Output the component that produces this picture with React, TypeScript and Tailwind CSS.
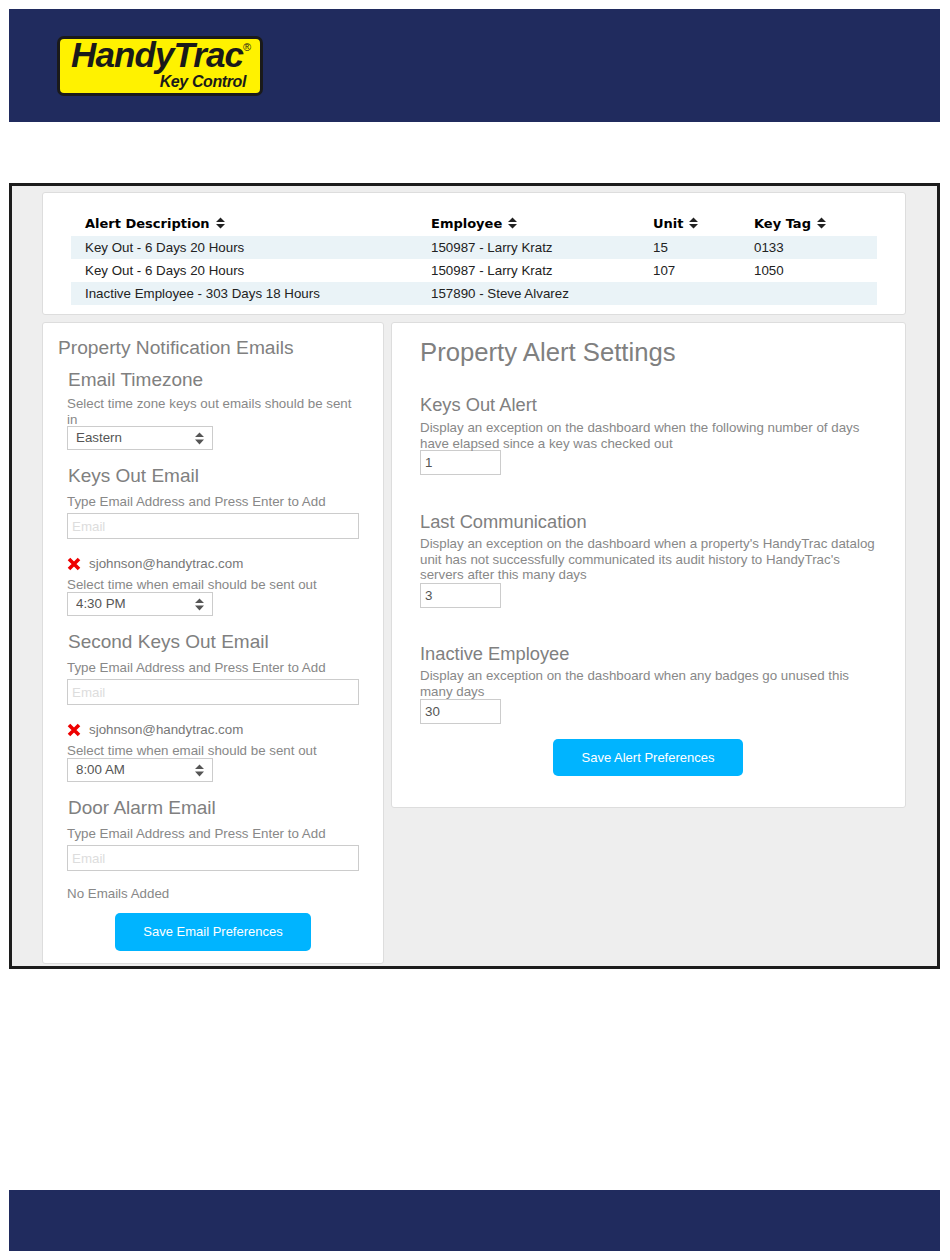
const SortIcon = () => (
  <svg viewBox="0 0 9 12" className="inline-block w-[9px] h-[12px] ml-[6px] align-[-1px]">
    <path d="M4.5 0.5 L9 5 H0 Z M0 7 H9 L4.5 11.5 Z" fill="#222" />
  </svg>
);

const SelectArrows = () => (
  <svg viewBox="0 0 9 13" className="absolute right-[9px] top-[7px] w-[9px] h-[13px] pointer-events-none">
    <path d="M4.5 0.5 L9 5 H0 Z M0 7.5 H9 L4.5 12.5 Z" fill="#555" />
  </svg>
);

const RemoveIcon = () => (
  <svg viewBox="0 0 14 14" className="w-[14px] h-[14px]">
    <path d="M2 2 L12 12 M12 2 L2 12" stroke="#ee0000" strokeWidth="3.6" />
  </svg>
);

const TimeSelect = ({ value }: { value: string }) => (
  <div className="relative w-[146px] h-[24px]">
    <select
      defaultValue={value}
      className="w-full h-full appearance-none bg-white border border-[#ccc] pl-[8px] text-[13.33px] leading-[20px] text-[#555] outline-none"
    >
      <option>{value}</option>
    </select>
    <SelectArrows />
  </div>
);

const EmailInput = () => (
  <input
    placeholder="Email"
    className="block w-[292px] h-[26px] bg-white border border-[#ccc] px-[4px] text-[13.33px] placeholder:text-[#ddd] outline-none"
  />
);

const EmailRow = () => (
  <div className="flex items-center h-[20px] mt-[15px] mb-[3px]">
    <RemoveIcon />
    <span className="ml-[8px] text-[13.33px] text-[#777]">sjohnson@handytrac.com</span>
  </div>
);

const alerts = [
  { desc: "Key Out - 6 Days 20 Hours", emp: "150987 - Larry Kratz", unit: "15", tag: "0133" },
  { desc: "Key Out - 6 Days 20 Hours", emp: "150987 - Larry Kratz", unit: "107", tag: "1050" },
  { desc: "Inactive Employee - 303 Days 18 Hours", emp: "157890 - Steve Alvarez", unit: "", tag: "" },
];

const SubHeading = ({ children }: { children: React.ReactNode }) => (
  <h3 className="text-[19px] leading-[24px] text-[#808080]">{children}</h3>
);

const AlertHeading = ({ children }: { children: React.ReactNode }) => (
  <h3 className="text-[18.3px] leading-[24px] text-[#808080]">{children}</h3>
);

const Hint = ({ children }: { children: React.ReactNode }) => (
  <p className="text-[13.33px] leading-[16px] text-[#888]">{children}</p>
);

const AlertHint = ({ children }: { children: React.ReactNode }) => (
  <p className="w-[455px] text-[13.33px] leading-[15.5px] text-[#888]">{children}</p>
);

const SmallInput = ({ value }: { value: string }) => (
  <input
    defaultValue={value}
    className="block w-[81px] h-[25px] bg-white border border-[#ccc] px-[4px] text-[13.33px] text-[#555] outline-none"
  />
);

export default function App() {
  return (
    <div className="w-[950px] h-[1260px] bg-white pt-[9px] pl-[9px] pr-[10px] font-['Liberation_Sans',Arial,sans-serif]">
      <header className="h-[113px] bg-[#202b5e] pt-[27px] pl-[48px]">
        <div className="relative w-[206px] h-[60px] bg-[#fff200] border-[3px] border-[#1a1a1a] rounded-[7px] italic font-bold text-[#1a1a1a]">
          <span className="absolute left-[11px] top-0 text-[35px] leading-[32px] tracking-[-0.9px] whitespace-nowrap">
            HandyTrac
          </span>
          <span className="absolute right-[14px] top-[35px] text-[16px] leading-[16px] tracking-[-0.4px] whitespace-nowrap">
            Key Control
          </span>
          <span className="absolute right-[9px] top-[2px] text-[11px] leading-[12px] font-normal not-italic">®</span>
        </div>
      </header>

      <main className="mt-[61px] h-[786px] border-[3px] border-[#1c1c1c] bg-[#eeeeee] pt-[6px] pl-[30px]">
        <section className="w-[864px] h-[123px] bg-white border border-[#ddd] rounded-[3px] pt-[19px] px-[28px]">
          <table className="w-[806px] table-fixed border-collapse text-[13.33px] text-[#222]">
            <thead>
              <tr className="h-[24px] font-['DejaVu_Sans',Verdana,sans-serif] text-[13px] font-bold text-black">
                <th className="w-[346px] pl-[14px] text-left">Alert Description<SortIcon /></th>
                <th className="w-[222px] pl-[14px] text-left">Employee<SortIcon /></th>
                <th className="w-[101px] pl-[14px] text-left">Unit<SortIcon /></th>
                <th className="w-[137px] pl-[14px] text-left">Key Tag<SortIcon /></th>
              </tr>
            </thead>
            <tbody>
              {alerts.map((a, i) => (
                <tr key={i} className={`h-[23px] ${i % 2 === 0 ? "bg-[#eaf3f7]" : "bg-white"}`}>
                  <td className="pl-[14px]">{a.desc}</td>
                  <td className="pl-[14px]">{a.emp}</td>
                  <td className="pl-[14px]">{a.unit}</td>
                  <td className="pl-[14px]">{a.tag}</td>
                </tr>
              ))}
            </tbody>
          </table>
        </section>

        <div className="flex items-start gap-[7px] mt-[7px]">
          <section className="w-[342px] h-[642px] bg-white border border-[#ddd] rounded-[3px] pt-[12px] pl-[15px]">
            <h2 className="text-[19.2px] leading-[26px] text-[#808080]">Property Notification Emails</h2>
            <div className="pl-[9px]">
              <div className="mt-[7px] pl-[1px]"><SubHeading>Email Timezone</SubHeading></div>
              <div className="w-[292px] h-[29px] mt-[4px]"><Hint>Select time zone keys out emails should be sent in</Hint></div>
              <TimeSelect value="Eastern" />

              <div className="mt-[15px] pl-[1px]"><SubHeading>Keys Out Email</SubHeading></div>
              <div className="mt-[6px] mb-[3px]"><Hint>Type Email Address and Press Enter to Add</Hint></div>
              <EmailInput />
              <EmailRow />
              <div className="h-[14px]"><Hint>Select time when email should be sent out</Hint></div>
              <TimeSelect value="4:30 PM" />

              <div className="mt-[15px] pl-[1px]"><SubHeading>Second Keys Out Email</SubHeading></div>
              <div className="mt-[6px] mb-[3px]"><Hint>Type Email Address and Press Enter to Add</Hint></div>
              <EmailInput />
              <EmailRow />
              <div className="h-[14px]"><Hint>Select time when email should be sent out</Hint></div>
              <TimeSelect value="8:00 AM" />

              <div className="mt-[15px] pl-[1px]"><SubHeading>Door Alarm Email</SubHeading></div>
              <div className="mt-[6px] mb-[3px]"><Hint>Type Email Address and Press Enter to Add</Hint></div>
              <EmailInput />
              <div className="mt-[15px]"><Hint>No Emails Added</Hint></div>
              <div className="w-[292px] flex justify-center mt-[11px]">
                <button className="w-[196px] h-[38px] bg-[#00b4ff] rounded-[5px] text-[13px] text-white">
                  Save Email Preferences
                </button>
              </div>
            </div>
          </section>

          <section className="w-[515px] h-[486px] bg-white border border-[#ddd] rounded-[3px] pt-[12px] pl-[28px]">
            <h2 className="text-[25.7px] leading-[34px] text-[#808080]">Property Alert Settings</h2>
            <div className="mt-[24px]"><AlertHeading>Keys Out Alert</AlertHeading></div>
            <div className="h-[30px] mt-[3px]"><AlertHint>Display an exception on the dashboard when the following number of days have elapsed since a key was checked out</AlertHint></div>
            <SmallInput value="1" />
            <div className="mt-[35px]"><AlertHeading>Last Communication</AlertHeading></div>
            <div className="mt-[2px] mb-[0.5px]"><AlertHint>Display an exception on the dashboard when a property's HandyTrac datalog unit has not successfully communicated its audit history to HandyTrac's servers after this many days</AlertHint></div>
            <SmallInput value="3" />
            <div className="mt-[34px]"><AlertHeading>Inactive Employee</AlertHeading></div>
            <div className="mt-[2px]"><AlertHint>Display an exception on the dashboard when any badges go unused this many days</AlertHint></div>
            <SmallInput value="30" />
            <div className="w-[456px] flex justify-center mt-[15px]">
              <button className="w-[190px] h-[37px] bg-[#00b4ff] rounded-[5px] text-[13px] text-white">
                Save Alert Preferences
              </button>
            </div>
          </section>
        </div>
      </main>

      <footer className="mt-[221px] h-[61px] bg-[#202b5e]" />
    </div>
  );
}
